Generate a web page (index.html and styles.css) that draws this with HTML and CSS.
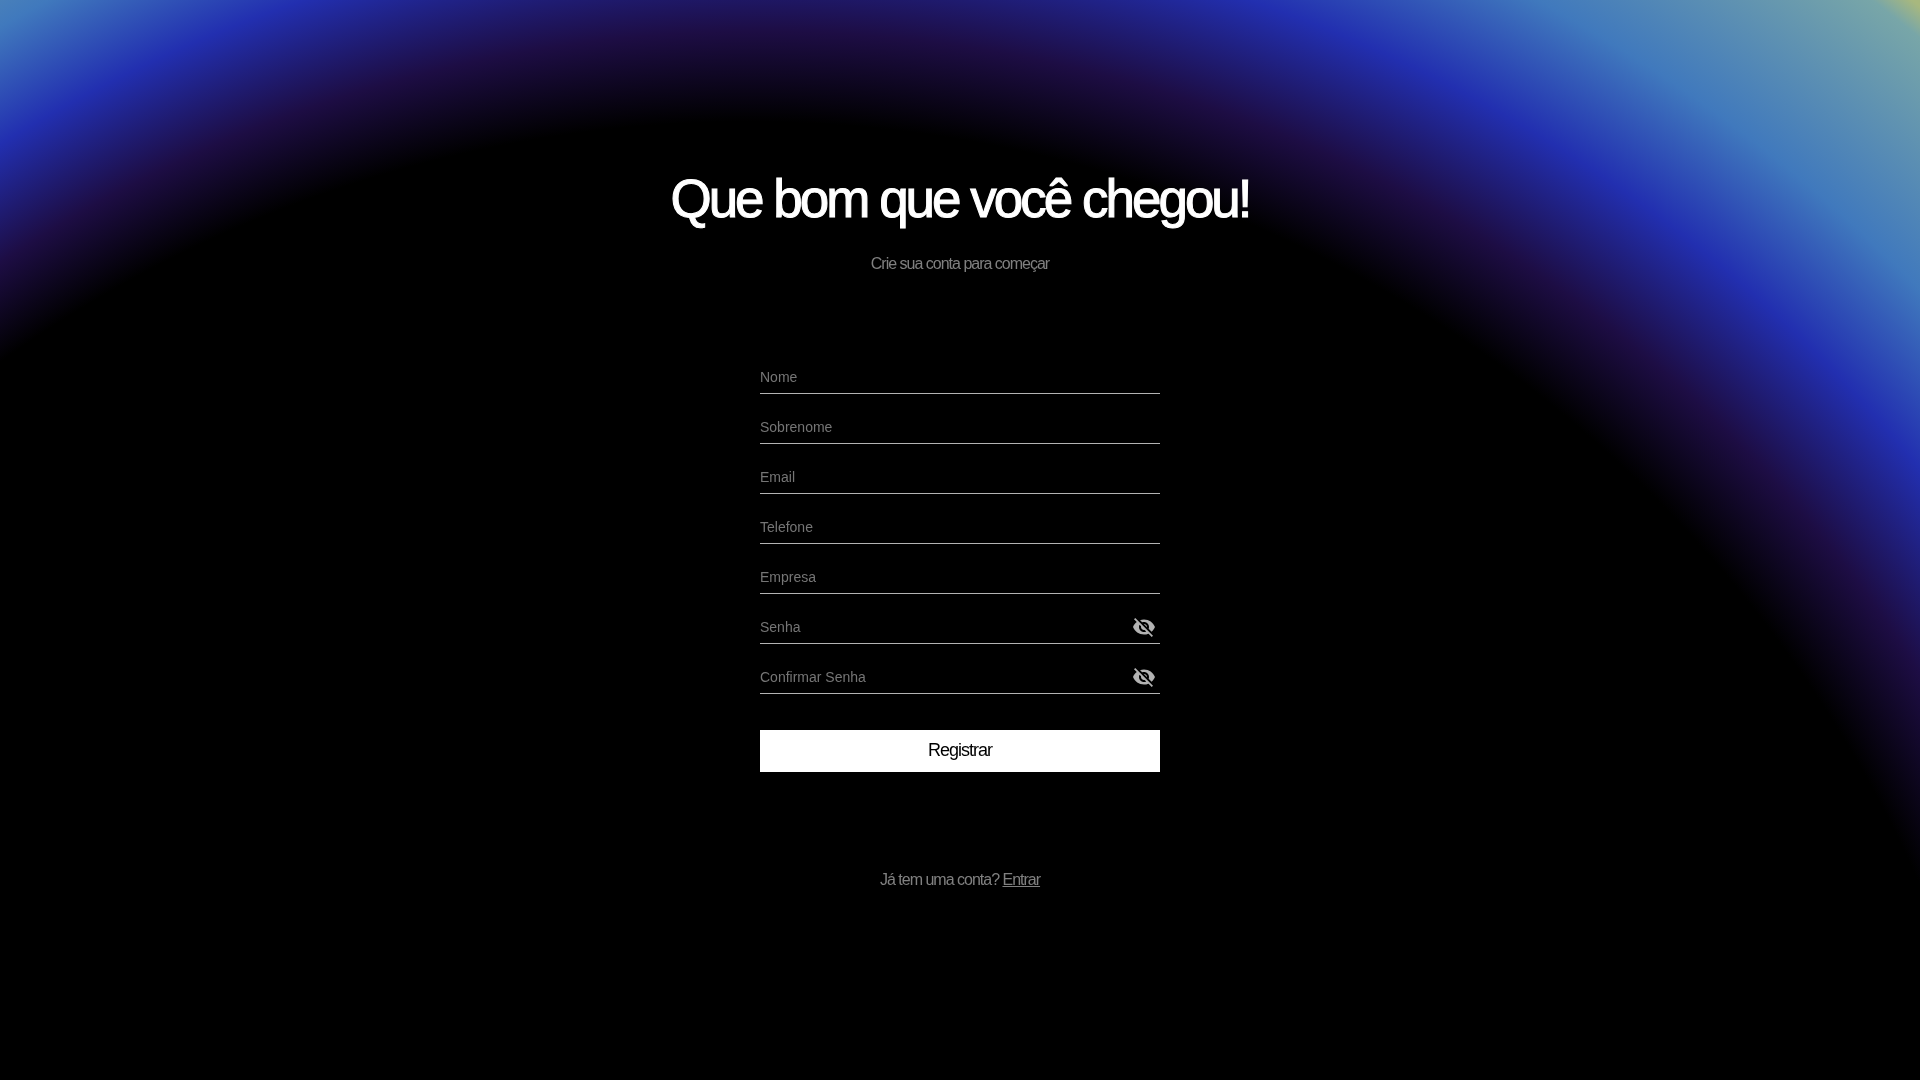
FILE: index.html
```
<!DOCTYPE html>
<html lang="pt-BR">
<head>
    <meta charset="UTF-8">
    <meta name="viewport" content="width=device-width, initial-scale=1.0">
    <title>Criar conta</title>
    <link rel="stylesheet" href="styles.css">
</head>
<body>
    <!-- Fundo: o centro do círculo fica abaixo da tela -->
    <svg class="backdrop" viewBox="0 0 1920 1080" preserveAspectRatio="none" aria-hidden="true">
        <defs>
            <radialGradient id="glow" gradientUnits="userSpaceOnUse" cx="828" cy="1369" r="1800" fx="549" fy="1488">
                <stop offset="71.2%" stop-color="#000"/>
                <stop offset="75.9%" stop-color="#1d0d44"/>
                <stop offset="81.6%" stop-color="#222fb0"/>
                <stop offset="87.3%" stop-color="#4079bd"/>
                <stop offset="96.2%" stop-color="#78a6a8"/>
                <stop offset="97.4%" stop-color="#a8b87e"/>
            </radialGradient>
        </defs>
        <rect width="1920" height="1080" fill="url(#glow)"/>
    </svg>

    <main class="page">
        <header class="intro">
            <h1 class="title">Que bom que você chegou!</h1>
            <p class="subtitle">Crie sua conta para começar</p>
        </header>
        <form class="form">
            <div class="field">
                <input type="text" name="nome" placeholder="Nome" aria-label="Nome">
            </div>
            <div class="field">
                <input type="text" name="sobrenome" placeholder="Sobrenome" aria-label="Sobrenome">
            </div>
            <div class="field">
                <input type="email" name="email" placeholder="Email" aria-label="Email">
            </div>
            <div class="field">
                <input type="tel" name="telefone" placeholder="Telefone" aria-label="Telefone">
            </div>
            <div class="field">
                <input type="text" name="empresa" placeholder="Empresa" aria-label="Empresa">
            </div>
            <div class="field">
                <input type="password" name="senha" placeholder="Senha" aria-label="Senha">
                <button type="button" class="toggle" aria-label="Mostrar senha">
                    <svg viewBox="0 0 24 24"><use href="#eye-off"/></svg>
                </button>
            </div>
            <div class="field">
                <input type="password" name="confirmar" placeholder="Confirmar Senha" aria-label="Confirmar Senha">
                <button type="button" class="toggle" aria-label="Mostrar confirmação da senha">
                    <svg viewBox="0 0 24 24"><use href="#eye-off"/></svg>
                </button>
            </div>
            <button type="submit" class="submit">Registrar</button>
        </form>
        <p class="login">Já tem uma conta? <a href="#entrar">Entrar</a></p>
    </main>

    <!-- Ícone usado nos dois campos de senha -->
    <svg class="sprite" aria-hidden="true">
        <symbol id="eye-off" viewBox="0 0 24 24">
            <path d="M12 7c2.76 0 5 2.24 5 5 0 .65-.13 1.26-.36 1.83l2.92 2.92c1.51-1.26 2.7-2.89 3.43-4.75-1.73-4.39-6-7.5-11-7.5-1.4 0-2.74.25-3.98.7l2.16 2.16C10.74 7.13 11.35 7 12 7zM2 4.27l2.28 2.28.46.46C3.08 8.3 1.78 10.02 1 12c1.73 4.39 6 7.5 11 7.5 1.55 0 3.03-.3 4.38-.84l.42.42L19.73 22 21 20.73 3.27 3 2 4.27zM7.53 9.8l1.55 1.55c-.05.21-.08.43-.08.65 0 1.66 1.34 3 3 3 .22 0 .44-.03.65-.08l1.55 1.55c-.67.33-1.41.53-2.2.53-2.76 0-5-2.24-5-5 0-.79.2-1.53.53-2.2zm4.31-.78l3.15 3.15.02-.16c0-1.66-1.34-3-3-3l-.17.01z"/>
        </symbol>
    </svg>
</body>
</html>
```
FILE: styles.css
```
*,
*::before,
*::after{
    box-sizing: border-box;
}

body{
    margin: 0;
    min-height: 100vh;
    background: #000;
    color: #fff;
    font-family: "Liberation Sans", Arial, sans-serif;
    letter-spacing: -1px;
}

.backdrop{
    position: fixed;
    inset: 0;
    z-index: -1;
    width: 100%;
    height: 100%;
}

.page{
    display: flex;
    flex-direction: column;
    align-items: center;
    padding: 168px 16px 0;
}
.intro{
    text-align: center;
}
.title{
    margin: 0;
    font-size: 53px;
    font-weight: 400;
    line-height: 62px;
    letter-spacing: -3px;
    -webkit-text-stroke: 1px #fff;
}
.subtitle,
.login{
    margin: 0;
    color: #808080;
    font-size: 16px;
    line-height: 24px;
}
.subtitle{
    margin-top: 22px;
}

.form{
    width: 100%;
    max-width: 400px;
    margin: 84px 0 96px;
}
.field{
    display: flex;
    align-items: center;
    height: 34px;
    margin-bottom: 16px;
    border-bottom: 1px solid #b3b3b3;
}
.field input{
    flex: 1;
    min-width: 0;
    padding: 0;
    border: 0;
    outline: 0;
    background: transparent;
    color: #fff;
    font: 14px "Liberation Sans", Arial, sans-serif;
}
.field input::placeholder{
    color: #757575;
}
.toggle{
    display: flex;
    padding: 0;
    margin-right: 4px;
    border: 0;
    background: none;
    color: #b3b3b3;
    cursor: pointer;
}
.toggle svg{
    width: 24px;
    height: 24px;
    fill: currentColor;
}
.submit{
    display: block;
    width: 100%;
    height: 42px;
    margin-top: 36px;
    padding: 0 0 2px;
    border: 0;
    background: #fff;
    color: #000;
    font: 18px "Liberation Sans", Arial, sans-serif;
    letter-spacing: -1px;
    cursor: pointer;
}
.login a{
    color: inherit;
}
.sprite{
    display: none;
}
```
